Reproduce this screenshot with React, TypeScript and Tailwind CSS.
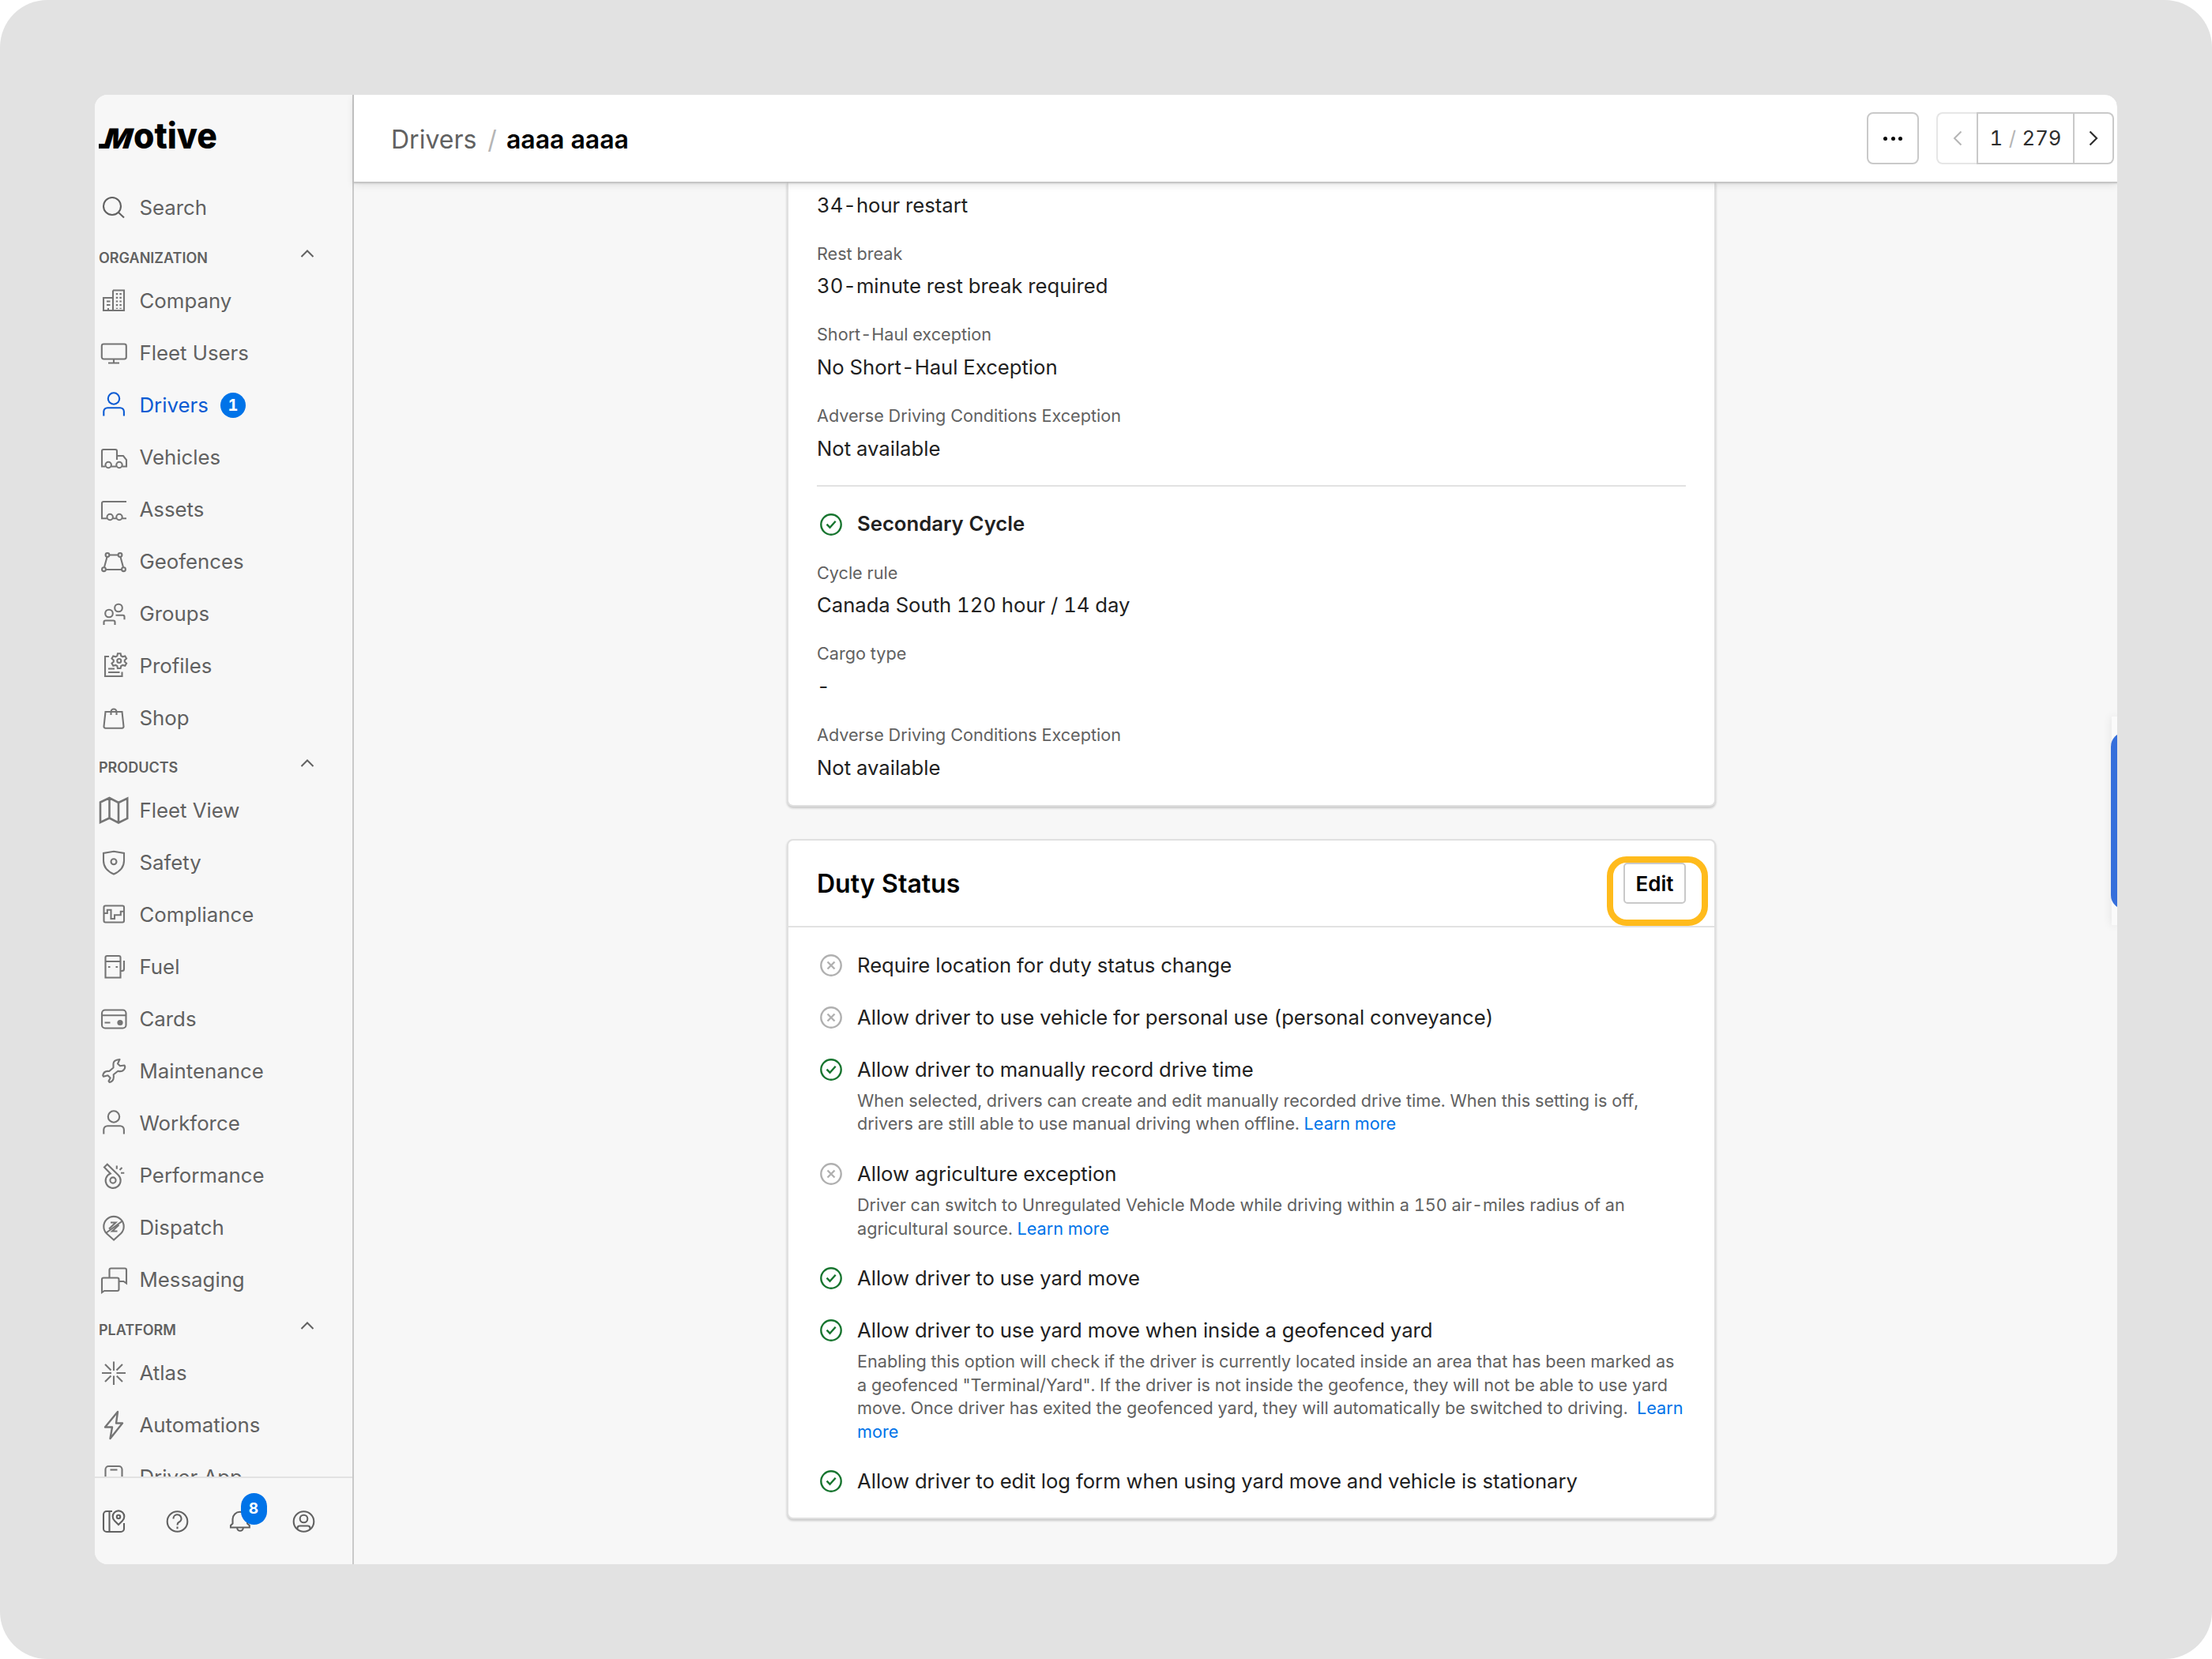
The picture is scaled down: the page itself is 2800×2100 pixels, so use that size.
import type { ReactNode } from "react";

type IconProps = { children: ReactNode };

// every sidebar icon is drawn on a 40x40 box
function Icon({ children }: IconProps) {
  return (
    <svg
      viewBox="0 0 40 40"
      className="h-10 w-10 shrink-0"
      fill="none"
      stroke="currentColor"
      strokeWidth={2.1}
    >
      {children}
    </svg>
  );
}

const UserShape = (
  <>
    <circle cx="20" cy="11.5" r="7.2" />
    <path d="M7.300 33.500v-5.500a4.800 4.800 0 0 1 4.800-4.800h16a4.800 4.800 0 0 1 4.800 4.800v5.500" />
  </>
);

const icons = {
  search: (
    <>
      <circle cx="18" cy="18" r="11" />
      <path d="M25.8 25.8 33 32.6" />
    </>
  ),
  company: (
    <>
      <path d="M19 6.5h14V32H7V16h12M19 6.5V32" />
      <g strokeWidth="2.4" strokeDasharray="2.2 2.5">
        <path d="M24 10v20M28.6 10v20" />
      </g>
      <path d="M11 20.5h4.5M11 25h4.5M13 32v-3" />
    </>
  ),
  monitor: (
    <>
      <rect x="4.8" y="8.500" width="31" height="19" rx="2.4" />
      <path d="M20 27.500v4.500M13 32.500h14" />
    </>
  ),
  user: UserShape,
  truck: (
    <>
      <path d="M9 31.500H5V12a2 2 0 0 1 2-2h15a2 2 0 0 1 2 2v11M17 31.500h6M31 31.500h5V23l-4-5h-8" />
      <circle cx="13.2" cy="29.500" r="3.700" />
      <circle cx="27" cy="29.500" r="3.700" />
    </>
  ),
  trailer: (
    <>
      <path d="M36 10H7a2 2 0 0 0-2 2v19.300h6.500M19 31.300h4.500M31 31.300h5" />
      <circle cx="15.200" cy="29.500" r="3.700" />
      <circle cx="27" cy="29.500" r="3.700" />
    </>
  ),
  geofence: (
    <>
      <path d="M14.500 11.500h11M11.500 14 8 27M28.500 14 32 27M10 30h20" />
      <circle cx="12" cy="11.500" r="2.400" />
      <circle cx="28" cy="11.500" r="2.400" />
      <circle cx="7.500" cy="29.700" r="2.400" />
      <circle cx="32.500" cy="29.700" r="2.400" />
    </>
  ),
  groups: (
    <>
      <circle cx="14" cy="19.500" r="4.800" />
      <circle cx="26" cy="12.500" r="4.800" />
      <path d="M7.500 34v-3.500a2 2 0 0 1 2-2h10a2 2 0 0 1 2 2V34M22.500 21.800h9a2 2 0 0 1 2 2v3.500" />
    </>
  ),
  profiles: (
    <>
      <path d="M14 8H9v25h21.500v-5.500M13 23.500h8M13 28h14.500" />
      <circle cx="26.800" cy="13.500" r="2.500" />
      <path d="M25 4.200h3.600l.7 3 2 1.100 3-.9 1.800 3.100-2.300 2.100v2l2.300 2.100-1.800 3.100-3-.9-2 1.100-.7 3H25l-.7-3-2-1.100-3 .9-1.800-3.100 2.300-2.100v-2l-2.300-2.100 1.800-3.100 3 .9 2-1.100z" />
    </>
  ),
  shop: (
    <>
      <path d="M9.500 12h21l2 18.500a2 2 0 0 1-2 2.200h-21a2 2 0 0 1-2-2.200z" />
      <path d="M16.500 16v-4a3.500 3.500 0 0 1 7 0v4" />
    </>
  ),
  map: (
    <g strokeWidth="2.600">
      <path d="M3 9.500 14.500 4l11.500 6L37.200 4.500V30L26 35.500l-11.500-6L3 35zM14.500 4v25.500M26 10v25.500" />
    </g>
  ),
  shield: (
    <>
      <path d="M20 5.800 33 8v9.500c0 8-5 13.500-13 17-8-3.500-13-9-13-17V8z" />
      <circle cx="20" cy="18.800" r="3.500" />
    </>
  ),
  compliance: (
    <>
      <rect x="7.500" y="8.500" width="25.500" height="21" rx="2" />
      <path d="M7.500 18h4.300v-4.300h4.700v11.300h4.500v-4.700h7.800v-4.500H33" />
    </>
  ),
  fuel: (
    <>
      <path d="M9.500 33.500V8a2 2 0 0 1 2-2h15a2 2 0 0 1 2 2v25.500zM9.500 13h19M28.500 25h2a2.500 2.500 0 0 0 2.500-2.500V12" />
      <path d="M13 20h2.500M22.500 20H25" />
    </>
  ),
  cards: (
    <>
      <rect x="5" y="8.500" width="30.500" height="23" rx="4" />
      <path d="M5 15.300h30.500M8.500 24.500h7" />
      <circle cx="28" cy="24.500" r="3.600" fill="currentColor" stroke="none" />
    </>
  ),
  wrench: (
    <path
      strokeLinejoin="round"
      d="M19.500 10.500C19.500 7 22.500 5.500 27.500 5l-2.500 5.500 3 2.800 5.500-.8.800 2c-.5 5-5 6.500-9 5.200l-5.600 4.600c.7 3.500.3 9-5.200 9.700l-1-1.500 2.200-4-3.200-3.200-5.500 1.500-.8-1.500c1-5 5-5.800 8-5.300l5.300-4.500z"
    />
  ),
  whistle: (
    <>
      <path d="M15.800 17.500 8 9.500l3.800-3.700 14 13.800a9.500 9.500 0 1 1-10-2.100z" />
      <circle cx="19" cy="26" r="3.600" />
      <path d="M23.800 7.500v4.300M27.500 13l3-3M29 16.700h4.300" />
    </>
  ),
  dispatch: (
    <>
      <path d="M20 35.500 10.800 27.300A12.700 12.700 0 1 1 29.200 27.300z" />
      <path d="M10.500 26.500 31 11.500M16 13.500h6.500L14 21.500M24.500 24.500h-6.500L26.500 16.500" />
    </>
  ),
  chat: (
    <>
      <path d="M14.500 17.500V7.500a2 2 0 0 1 2-2H34a2 2 0 0 1 2 2v17l-3.500-2.500h-6" />
      <path d="M5 36V19.500a2 2 0 0 1 2-2h17.500a2 2 0 0 1 2 2V32a2 2 0 0 1-2 2H8z" />
    </>
  ),
  atlas: (
    <path d="M20 5.500V17M20 23.500V35M5 20h12M23.500 20H35M9 9l7.500 7.500M23.800 23.800 31 31M31 9l-7.500 7.500M16.500 23.500 9 31" />
  ),
  bolt: (
    <path
      strokeWidth="2.400"
      strokeLinejoin="round"
      d="M25 3 9 22.500h9L15.500 37 31 17.500h-8z"
    />
  ),
  phone: (
    <>
      <path d="M9.500 42V10a4 4 0 0 1 4-4h13a4 4 0 0 1 4 4v32" />
      <path d="M15.500 10.500h9" />
    </>
  ),
};

type IconName = keyof typeof icons;
type NavItem = { label: string; icon: IconName; active?: boolean; badge?: number };

const sections: { title: string; items: NavItem[] }[] = [
  {
    title: "ORGANIZATION",
    items: [
      { label: "Company", icon: "company" },
      { label: "Fleet Users", icon: "monitor" },
      { label: "Drivers", icon: "user", active: true, badge: 1 },
      { label: "Vehicles", icon: "truck" },
      { label: "Assets", icon: "trailer" },
      { label: "Geofences", icon: "geofence" },
      { label: "Groups", icon: "groups" },
      { label: "Profiles", icon: "profiles" },
      { label: "Shop", icon: "shop" },
    ],
  },
  {
    title: "PRODUCTS",
    items: [
      { label: "Fleet View", icon: "map" },
      { label: "Safety", icon: "shield" },
      { label: "Compliance", icon: "compliance" },
      { label: "Fuel", icon: "fuel" },
      { label: "Cards", icon: "cards" },
      { label: "Maintenance", icon: "wrench" },
      { label: "Workforce", icon: "user" },
      { label: "Performance", icon: "whistle" },
      { label: "Dispatch", icon: "dispatch" },
      { label: "Messaging", icon: "chat" },
    ],
  },
  {
    title: "PLATFORM",
    items: [
      { label: "Atlas", icon: "atlas" },
      { label: "Automations", icon: "bolt" },
      { label: "Driver App", icon: "phone" },
    ],
  },
];

function NavRow({ item }: { item: NavItem }) {
  return (
    <div
      className={`flex h-[66px] items-center pl-[3.500px] ${
        item.active ? "text-[#0b5bd3]" : "text-[#757575]"
      }`}
    >
      <Icon>{icons[item.icon]}</Icon>
      <span
        className={`ml-[13px] text-[25.800px] leading-8 ${
          item.active ? "text-[#0b5bd3]" : "text-[#616161]"
        }`}
      >
        {item.label}
      </span>
      {item.badge && (
        <span className="ml-[15px] flex h-8 w-8 items-center justify-center rounded-full bg-[#0073e8] text-[20px] font-bold text-white tabular-nums">
          {item.badge}
        </span>
      )}
    </div>
  );
}

function Logo() {
  return (
    <svg viewBox="0 -8 154 56" className="h-14 w-[154px] overflow-visible" role="img">
      <path d="M0 32h12" stroke="#000" strokeWidth="6" />
      <text
        x="0"
        y="0"
        transform="translate(4 35) skewX(-17)"
        fontFamily="Inter"
        fontWeight="900"
        fontSize="35"
        textLength="35"
        lengthAdjust="spacingAndGlyphs"
      >
        M
      </text>
      <text
        x="44"
        y="35"
        fontFamily="Inter"
        fontWeight="800"
        fontSize="45"
        textLength="106"
        lengthAdjust="spacingAndGlyphs"
      >
        otive
      </text>
    </svg>
  );
}

function Sidebar() {
  return (
    <aside className="flex w-[328px] shrink-0 flex-col border-r-2 border-[#c9c9c9] bg-[#f7f7f7]">
      <div className="flex h-[110px] shrink-0 items-start pt-[25px] pl-[5px]">
        <Logo />
      </div>
      <div className="flex min-h-0 flex-1 flex-col overflow-hidden">
        <div className="-mt-px flex h-[67px] shrink-0 items-center pl-[3.500px] text-[#616161]">
          <Icon>{icons.search}</Icon>
          <span className="ml-[13px] text-[25.800px] leading-8">Search</span>
        </div>
        {sections.map((section) => (
          <div key={section.title} className="shrink-0">
            <div className="flex h-[51.500px] items-center justify-between pr-[48px] pl-[5px] text-[#616161]">
              <span className="mt-2.5 text-[18px] leading-6 font-semibold">
                {section.title}
              </span>
              <svg
                viewBox="0 0 18 12"
                className="h-3 w-[18px] -translate-y-px"
                fill="none"
                stroke="currentColor"
                strokeWidth="2"
              >
                <path d="m1.500 10 7.500-7.500 7.500 7.500" />
              </svg>
            </div>
            {section.items.map((item) => (
              <NavRow key={item.label} item={item} />
            ))}
          </div>
        ))}
      </div>
      <div className="flex h-[111px] shrink-0 items-start gap-10 border-t-2 border-[#e2e2e2] pt-[35px] pl-[3.500px] text-[#616161]">
        <Icon>
          <path d="M18 7H11a4 4 0 0 0-4 4v18a4 4 0 0 0 4 4h18a4 4 0 0 0 4-4v-7M14.500 7v26" />
          <path d="m26 24-5-5a7.300 7.300 0 1 1 10 0z" />
          <circle cx="26" cy="14" r="2.200" />
        </Icon>
        <Icon>
          <circle cx="20.500" cy="20" r="12.800" />
          <path d="M15.500 16.500a5 5 0 1 1 7 4.300c-1.500.8-2 1.500-2 3.700M20.500 26.500v2.800" />
        </Icon>
        <div className="relative">
          <Icon>
            <path d="M8 27.500v-2.500l2.500-2.500V17a9.300 9.300 0 0 1 18.600 0v5.500l2.700 2.500v2.500zM16.200 28a3.800 3.800 0 0 0 7.600 0" />
          </Icon>
          <span className="absolute -top-4 left-[21px] flex h-10 w-[33px] items-center justify-center rounded-full bg-[#0073e8] text-[19px] font-bold text-white">
            8
          </span>
        </div>
        <Icon>
          <circle cx="20.500" cy="20" r="12.800" />
          <circle cx="20.500" cy="16.500" r="4.800" />
          <path d="M12.500 30v-1.500a3 3 0 0 1 3-3h10a3 3 0 0 1 3 3V30" />
        </Icon>
      </div>
    </aside>
  );
}

function Header() {
  return (
    <header className="relative z-10 flex h-[110px] shrink-0 items-center justify-between bg-white pr-[4px] pl-[47px] shadow-[0_1px_2px_1px_#bdbdbd,0_4px_10px_0_rgba(0,0,0,0.1)]">
      <div className="flex items-baseline pt-[3px] text-[32px]">
        <span className="text-[#616161]">Drivers</span>
        <span className="mr-3 ml-[14px] text-[#b5b5b5]">/</span>
        <span className="font-semibold text-black">aaaa aaaa</span>
      </div>
      <div className="flex items-center">
        <button className="mr-[22px] flex h-[66px] w-[66px] items-center justify-center gap-[4.500px] rounded-lg border-2 border-[#c9c9c9]">
          <i className="h-[5px] w-[5px] rounded-full bg-black" />
          <i className="h-[5px] w-[5px] rounded-full bg-black" />
          <i className="h-[5px] w-[5px] rounded-full bg-black" />
        </button>
        <div className="flex h-[66px]">
          <div className="flex w-[51px] items-center justify-center rounded-l-lg border-2 border-r-0 border-[#e6e6e6] text-[#b5b5b5]">
            <svg viewBox="0 0 12 20" className="h-5 w-3" fill="none" stroke="currentColor" strokeWidth="2">
              <path d="M10.500 1.500 2 10l8.500 8.500" />
            </svg>
          </div>
          <div className="flex w-[124px] items-center justify-center gap-[7.500px] border-2 border-[#c9c9c9] text-[25.700px] text-[#2e2e2e] tabular-nums">
            <span>1</span>
            <span className="text-[#b5b5b5]">/</span>
            <span>279</span>
          </div>
          <div className="flex w-[50px] items-center justify-center rounded-r-lg border-2 border-l-0 border-[#c9c9c9] text-[#2e2e2e]">
            <svg viewBox="0 0 12 20" className="h-5 w-3" fill="none" stroke="currentColor" strokeWidth="2.200">
              <path d="M1.500 1.500 10 10l-8.500 8.500" />
            </svg>
          </div>
        </div>
      </div>
    </header>
  );
}

function StatusIcon({ on }: { on: boolean }) {
  return (
    <svg
      viewBox="0 0 30 30"
      className={`h-[30px] w-[30px] shrink-0 ${on ? "text-[#17752f]" : "text-[#b0b0b0]"}`}
      fill="none"
      stroke="currentColor"
      strokeWidth="2.400"
    >
      <circle cx="15" cy="15" r="12.700" />
      {on ? <path d="m9.500 14.700 4 4 7.200-8" /> : <path d="m10.500 10.500 9 9M19.500 10.500l-9 9" />}
    </svg>
  );
}

function Field({ label, value }: { label: string; value: string }) {
  return (
    <div className="mb-[27px]">
      <div className="-mt-px text-[21.640px] leading-8 text-[#616161]">{label}</div>
      <div className="mt-[5.700px] text-[25.650px] leading-[39px] text-[#212121]">{value}</div>
    </div>
  );
}

const LearnMore = () => <a className="text-[#0073e8]">Learn more</a>;

function Setting({ on, title, children }: { on: boolean; title: string; children?: ReactNode }) {
  return (
    <div className="flex gap-[18px] pl-[3px]">
      <div className="pt-[5px]">
        <StatusIcon on={on} />
      </div>
      <div>
        <div className="text-[25.650px] leading-10 text-[#212121]">{title}</div>
        {children && (
          <p className="mt-[5px] mb-[2.400px] w-[1056px] text-[21.640px] leading-[29.400px] text-[#616161]">
            {children}
          </p>
        )}
      </div>
    </div>
  );
}

export default function App() {
  return (
    <div className="h-[2100px] w-[2800px] bg-white font-['Inter',sans-serif]">
      <div className="h-full w-full rounded-[60px] bg-[#e2e2e2] p-[120px]">
        <div className="flex h-[1860px] w-[2560px] overflow-hidden rounded-2xl bg-[#f7f7f7]">
          <Sidebar />
          <div className="relative flex min-w-0 flex-1 flex-col">
            <Header />
            <main className="flex min-h-0 flex-1 flex-col overflow-hidden pl-[548px] tabular-nums">
              <section className="h-[791px] w-[1176px] shrink-0 rounded-b-lg border-2 border-t-0 border-[#e0e0e0] bg-white px-[36px] shadow-[0_2px_3px_rgba(0,0,0,0.2)]">
                <div className="mb-[26.700px] pt-[10px] text-[25.650px] leading-[39px] text-[#212121]">
                  34-hour restart
                </div>
                <Field label="Rest break" value="30-minute rest break required" />
                <Field label="Short-Haul exception" value="No Short-Haul Exception" />
                <Field label="Adverse Driving Conditions Exception" value="Not available" />
                <hr className="border-t-2 border-[#e2e2e2]" />
                <div className="mt-[28px] mb-[26px] flex h-10 items-center gap-[18px] pl-[3px]">
                  <StatusIcon on />
                  <span className="text-[25.700px] font-semibold text-[#212121]">Secondary Cycle</span>
                </div>
                <Field label="Cycle rule" value="Canada South 120 hour / 14 day" />
                <Field label="Cargo type" value="-" />
                <Field label="Adverse Driving Conditions Exception" value="Not available" />
              </section>

              <section className="mt-[41px] h-[861px] w-[1176px] shrink-0 rounded-lg border-2 border-[#e0e0e0] bg-white shadow-[0_2px_3px_rgba(0,0,0,0.2)]">
                <div className="flex h-[110px] items-center justify-between border-b-2 border-[#e2e2e2] px-[36px]">
                  <h2 className="pt-px text-[32px] font-semibold text-black">Duty Status</h2>
                  <div className="relative">
                    <button className="flex h-[52px] w-[79px] items-center justify-center rounded-[5px] border-2 border-[#c9c9c9] text-[26px] font-semibold text-black">
                      Edit
                    </button>
                    {/* highlight ring */}
                    <div className="absolute -top-2 -left-[21px] h-[88px] w-32 rounded-[25px] border-8 border-[#ffbb1c]" />
                  </div>
                </div>
                <div className="flex flex-col gap-[26px] px-[36px] pt-[28px]">
                  <Setting on={false} title="Require location for duty status change" />
                  <Setting on={false} title="Allow driver to use vehicle for personal use (personal conveyance)" />
                  <Setting on title="Allow driver to manually record drive time">
                    When selected, drivers can create and edit manually recorded drive time. When this setting is off,
                    <br />
                    drivers are still able to use manual driving when offline. <LearnMore />
                  </Setting>
                  <Setting on={false} title="Allow agriculture exception">
                    Driver can switch to Unregulated Vehicle Mode while driving within a 150 air-miles radius of an
                    <br />
                    agricultural source. <LearnMore />
                  </Setting>
                  <Setting on title="Allow driver to use yard move" />
                  <Setting on title="Allow driver to use yard move when inside a geofenced yard">
                    Enabling this option will check if the driver is currently located inside an area that has been marked as
                    <br />
                    a geofenced "Terminal/Yard". If the driver is not inside the geofence, they will not be able to use yard
                    <br />
                    move. Once driver has exited the geofenced yard, they will automatically be switched to driving. &nbsp;
                    <a className="text-[#0073e8]">
                      Learn
                      <br />
                      more
                    </a>
                  </Setting>
                  <Setting on title="Allow driver to edit log form when using yard move and vehicle is stationary" />
                </div>
              </section>
            </main>
            {/* help tab peeking in from the right edge */}
            <div className="absolute top-[787px] right-0 h-[264px] w-[7px] bg-[#fafafa] shadow-[0_0_12px_rgba(0,0,0,0.1)]" />
            <div className="absolute top-[807px] -right-5 h-[224px] w-7 rounded-l-[18px] bg-[#366fdb]" />
          </div>
        </div>
      </div>
    </div>
  );
}
